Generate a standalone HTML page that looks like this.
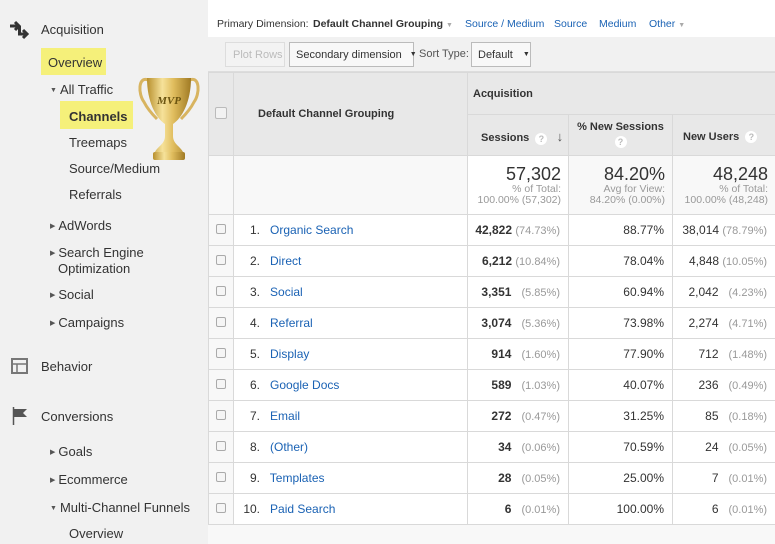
<!DOCTYPE html>
<html><head><meta charset="utf-8"><style>
*{margin:0;padding:0;box-sizing:border-box}
body{width:775px;height:544px;overflow:hidden;font-family:"Liberation Sans",Arial,sans-serif;background:#fff;position:relative;color:#333}
.a{position:absolute;white-space:nowrap}
#side{position:absolute;left:0;top:0;width:208px;height:544px;background:#f1f1f1}
.s{font-size:13px;color:#333}
.tri{font-size:7px;color:#555;margin-right:3px;position:relative;top:-2px}
.hl{background:#f5f07a}
.lnk{color:#1a62b4;font-size:12px}
table{border-collapse:collapse;position:absolute;left:208px;top:72px;width:567px;font-size:12px;table-layout:fixed}
td,th{border:1px solid #d9d9d9}
th{background:#e8e8e8;font-weight:bold;color:#333;font-size:11px}
.q{display:inline-block;width:12px;height:12px;border-radius:6px;background:#fff;color:#bbb;font-size:9px;line-height:12px;text-align:center;font-weight:bold;vertical-align:middle}
tr.r td{height:31px}
.cb{display:inline-block;width:10px;height:10px;border:1px solid #aaa;border-radius:2px;background:#f5f5f5}
.num{text-align:right;padding-right:8px}
.g{color:#999;font-size:11px}
.btn{position:absolute;display:flex;align-items:center;font-size:11px;white-space:nowrap}
.n{display:inline-block;width:22px;text-align:right}
.tl{position:absolute;top:18px;font-size:10.5px;color:#1a62b4;white-space:nowrap}
</style></head><body>
<div id="side">
<svg class="a" style="left:9px;top:20px" width="20" height="20" viewBox="0 0 20 20"><path d="M1 6h9M6 2l4 4-4 4" stroke="#333" stroke-width="3" fill="none"/><path d="M9 14h9M14 10l4 4-4 4" stroke="#333" stroke-width="3" fill="none"/><rect x="9" y="6" width="3" height="8" fill="#333"/></svg>
<div class="a s" style="left:41px;top:22px">Acquisition</div>
<div class="a s hl" style="left:41px;top:48px;width:65px;height:27px;padding:7px 0 0 7px">Overview</div>
<div class="a s" style="left:50px;top:82px"><span class="tri">▼</span>All Traffic</div>
<div class="a s hl" style="left:60px;top:101px;width:73px;height:28px;padding:8px 0 0 9px;font-weight:bold">Channels</div>
<div class="a s" style="left:69px;top:135px">Treemaps</div>
<div class="a s" style="left:69px;top:161px">Source/Medium</div>
<div class="a s" style="left:69px;top:187px">Referrals</div>
<div class="a s" style="left:50px;top:218px"><span class="tri">▶</span>AdWords</div>
<div class="a s" style="left:50px;top:246px;line-height:13px"><span class="tri">▶</span>Search Engine<br><span style="padding-left:8px">Optimization</span></div>
<div class="a s" style="left:50px;top:287px"><span class="tri">▶</span>Social</div>
<div class="a s" style="left:50px;top:315px"><span class="tri">▶</span>Campaigns</div>
<svg class="a" style="left:11px;top:358px" width="17" height="16"><rect x="1" y="1" width="15" height="14" fill="none" stroke="#777" stroke-width="2"/><path d="M1 6h15M6 6v9" stroke="#777" stroke-width="1.5"/></svg>
<div class="a s" style="left:41px;top:359px">Behavior</div>
<svg class="a" style="left:12px;top:407px" width="16" height="18"><path d="M1.5 0v18" stroke="#555" stroke-width="1.5"/><path d="M2 2h13l-4 4 4 4H2z" fill="#555"/></svg>
<div class="a s" style="left:41px;top:409px">Conversions</div>
<div class="a s" style="left:50px;top:444px"><span class="tri">▶</span>Goals</div>
<div class="a s" style="left:50px;top:472px"><span class="tri">▶</span>Ecommerce</div>
<div class="a s" style="left:50px;top:500px"><span class="tri">▼</span>Multi-Channel Funnels</div>
<div class="a s" style="left:69px;top:526px">Overview</div>
<svg class="a" style="left:136px;top:72px" width="66" height="90" viewBox="0 0 66 90">
<defs><linearGradient id="gd" x1="0" x2="1"><stop offset="0" stop-color="#b8902e"/><stop offset=".35" stop-color="#f6e29a"/><stop offset=".6" stop-color="#e0bd5e"/><stop offset="1" stop-color="#a07a24"/></linearGradient></defs>
<path d="M12 8 C2 4 2 22 8 30 C12 38 18 44 21 47" stroke="#d8b460" stroke-width="3" fill="none"/>
<path d="M54 8 C64 4 64 22 58 30 C54 38 48 44 45 47" stroke="#d8b460" stroke-width="3" fill="none"/>
<path d="M11 6 H55 C55 30 46 46 37 52 V64 C37 72 44 74 47 80 H19 C22 74 29 72 29 64 V52 C20 46 11 30 11 6Z" fill="url(#gd)"/>
<rect x="17" y="80" width="32" height="8" rx="2" fill="url(#gd)"/>
<text x="33" y="32" text-anchor="middle" font-family="Liberation Serif,serif" font-style="italic" font-weight="bold" font-size="11" fill="#6b5410">MVP</text>
</svg>
</div>
<div class="a" style="left:208px;top:37px;width:567px;height:35px;background:#f1f1f1;border-bottom:1px solid #ddd"></div>
<div class="a" style="left:217px;top:18px;font-size:10.5px;color:#333">Primary Dimension:</div>
<div class="a" style="left:313px;top:18px;font-size:10.5px;font-weight:bold;color:#333">Default Channel Grouping <span style="color:#aaa;font-size:7px">▼</span></div>
<div class="tl" style="left:465px">Source / Medium</div>
<div class="tl" style="left:554px">Source</div>
<div class="tl" style="left:599px">Medium</div>
<div class="tl" style="left:649px">Other <span style="color:#aaa;font-size:7px">▼</span></div>
<div class="btn" style="left:225px;top:42px;width:60px;height:25px;border:1px solid #ddd;background:#f3f3f3;color:#bbb;padding-left:7px">Plot Rows</div>
<div class="btn" style="left:289px;top:42px;width:125px;height:25px;border:1px solid #bbb;background:#f8f8f8;padding-left:6px">Secondary dimension<span style="font-size:7px;margin-left:8px">▼</span></div>
<div class="a" style="left:419px;top:48px;font-size:11px;color:#555">Sort Type:</div>
<div class="btn" style="left:471px;top:42px;width:60px;height:25px;border:1px solid #bbb;background:#f8f8f8;padding-left:6px">Default<span style="font-size:7px;margin-left:10px">▼</span></div>
<table>
<colgroup><col style="width:25px"><col style="width:234px"><col style="width:101px"><col style="width:104px"><col style="width:103px"></colgroup>
<tr style="height:42px"><th rowspan="2" style="background:#e8e8e8"><span class="cb" style="width:12px;height:12px;background:#f2f2f2;border-color:#bbb"></span></th><th rowspan="2" style="text-align:left;padding-left:24px">Default Channel Grouping</th><th colspan="3" style="text-align:left;padding-left:5px">Acquisition</th></tr>
<tr style="height:41px"><th style="text-align:left;padding-left:13px;padding-top:4px">Sessions &nbsp;<span class="q">?</span> &nbsp;&nbsp;<span style="font-size:13px;color:#555">↓</span></th><th style="padding-bottom:2px">% New Sessions<br><span class="q" style="margin-top:3px">?</span></th><th style="text-align:left;padding-left:10px;padding-top:4px">New Users &nbsp;<span class="q">?</span></th></tr>
<tr style="height:59px"><td style="background:#f8f8f8"></td><td style="background:#f8f8f8"></td>
<td class="num" style="padding-right:7px;line-height:11px"><div style="font-size:18px;line-height:20px;color:#333">57,302</div><div class="g" style="font-size:10.5px">% of Total:<br>100.00% (57,302)</div></td>
<td class="num" style="padding-right:7px;line-height:11px;background:#f8f8f8"><div style="font-size:18px;line-height:20px;color:#333">84.20%</div><div class="g" style="font-size:10.5px">Avg for View:<br>84.20% (0.00%)</div></td>
<td class="num" style="padding-right:7px;line-height:11px;background:#f8f8f8"><div style="font-size:18px;line-height:20px;color:#333">48,248</div><div class="g" style="font-size:10.5px">% of Total:<br>100.00% (48,248)</div></td></tr>
<tr class="r"><td style="text-align:center;background:#f8f8f8"><span class="cb"></span></td><td style="padding-left:4px"><span class="n">1.</span>&nbsp;&nbsp; <span class="lnk">Organic Search</span></td><td class="num"><b>42,822</b> <span class="g">(74.73%)</span></td><td class="num">88.77%</td><td class="num">38,014 <span class="g">(78.79%)</span></td></tr>
<tr class="r"><td style="text-align:center;background:#f8f8f8"><span class="cb"></span></td><td style="padding-left:4px"><span class="n">2.</span>&nbsp;&nbsp; <span class="lnk">Direct</span></td><td class="num"><b>6,212</b> <span class="g">(10.84%)</span></td><td class="num">78.04%</td><td class="num">4,848 <span class="g">(10.05%)</span></td></tr>
<tr class="r"><td style="text-align:center;background:#f8f8f8"><span class="cb"></span></td><td style="padding-left:4px"><span class="n">3.</span>&nbsp;&nbsp; <span class="lnk">Social</span></td><td class="num"><b>3,351</b> &nbsp; <span class="g">(5.85%)</span></td><td class="num">60.94%</td><td class="num">2,042 &nbsp; <span class="g">(4.23%)</span></td></tr>
<tr class="r"><td style="text-align:center;background:#f8f8f8"><span class="cb"></span></td><td style="padding-left:4px"><span class="n">4.</span>&nbsp;&nbsp; <span class="lnk">Referral</span></td><td class="num"><b>3,074</b> &nbsp; <span class="g">(5.36%)</span></td><td class="num">73.98%</td><td class="num">2,274 &nbsp; <span class="g">(4.71%)</span></td></tr>
<tr class="r"><td style="text-align:center;background:#f8f8f8"><span class="cb"></span></td><td style="padding-left:4px"><span class="n">5.</span>&nbsp;&nbsp; <span class="lnk">Display</span></td><td class="num"><b>914</b> &nbsp; <span class="g">(1.60%)</span></td><td class="num">77.90%</td><td class="num">712 &nbsp; <span class="g">(1.48%)</span></td></tr>
<tr class="r"><td style="text-align:center;background:#f8f8f8"><span class="cb"></span></td><td style="padding-left:4px"><span class="n">6.</span>&nbsp;&nbsp; <span class="lnk">Google Docs</span></td><td class="num"><b>589</b> &nbsp; <span class="g">(1.03%)</span></td><td class="num">40.07%</td><td class="num">236 &nbsp; <span class="g">(0.49%)</span></td></tr>
<tr class="r"><td style="text-align:center;background:#f8f8f8"><span class="cb"></span></td><td style="padding-left:4px"><span class="n">7.</span>&nbsp;&nbsp; <span class="lnk">Email</span></td><td class="num"><b>272</b> &nbsp; <span class="g">(0.47%)</span></td><td class="num">31.25%</td><td class="num">85 &nbsp; <span class="g">(0.18%)</span></td></tr>
<tr class="r"><td style="text-align:center;background:#f8f8f8"><span class="cb"></span></td><td style="padding-left:4px"><span class="n">8.</span>&nbsp;&nbsp; <span class="lnk">(Other)</span></td><td class="num"><b>34</b> &nbsp; <span class="g">(0.06%)</span></td><td class="num">70.59%</td><td class="num">24 &nbsp; <span class="g">(0.05%)</span></td></tr>
<tr class="r"><td style="text-align:center;background:#f8f8f8"><span class="cb"></span></td><td style="padding-left:4px"><span class="n">9.</span>&nbsp;&nbsp; <span class="lnk">Templates</span></td><td class="num"><b>28</b> &nbsp; <span class="g">(0.05%)</span></td><td class="num">25.00%</td><td class="num">7 &nbsp; <span class="g">(0.01%)</span></td></tr>
<tr class="r"><td style="text-align:center;background:#f8f8f8"><span class="cb"></span></td><td style="padding-left:4px"><span class="n">10.</span>&nbsp;&nbsp; <span class="lnk">Paid Search</span></td><td class="num"><b>6</b> &nbsp; <span class="g">(0.01%)</span></td><td class="num">100.00%</td><td class="num">6 &nbsp; <span class="g">(0.01%)</span></td></tr>
</table>
<div class="a" style="left:208px;top:525px;width:567px;height:19px;background:#f8f8f8"></div>
</body></html>
